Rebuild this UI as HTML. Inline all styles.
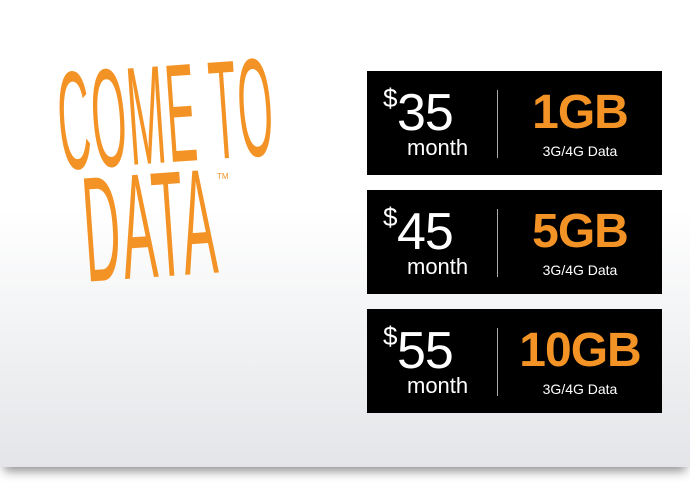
<!DOCTYPE html>
<html><head><style>
body{margin:0;width:690px;height:490px;background:#fff;position:relative;overflow:hidden;font-family:"Liberation Sans",sans-serif}
.card{position:absolute;left:0;top:0;width:690px;height:467px;background:linear-gradient(#fff 0%,#fff 45%,#e3e5e8 100%);box-shadow:0 8px 10px -4px rgba(0,0,0,.45)}
.hw{position:absolute;color:#f39325;font-weight:normal;transform-origin:left top;white-space:nowrap;letter-spacing:4px;line-height:1}
.box{position:absolute;left:367px;width:295px;height:104px;background:#000;color:#fff}
.d{position:absolute;left:16px;top:12px;font-size:26px}
.p{position:absolute;left:30px;top:12px;font-size:52px;font-weight:300;letter-spacing:-1px}
.m{position:absolute;left:40px;top:64px;font-size:22px}
.v{position:absolute;left:130px;top:19px;width:1px;height:68px;background:#aaa}
.g{position:absolute;left:0;right:0;padding-left:131px;text-align:center;top:14px;font-size:48px;font-weight:bold;color:#f39325;letter-spacing:-1px}
.s{position:absolute;left:131px;right:0;text-align:center;top:72px;font-size:14px}
</style></head><body>
<div class="card"></div>
<div class="hw" style="left:53px;top:52px;font-size:140px;transform:rotate(-4deg) scaleX(.32)">COME TO</div>
<div class="hw" style="left:78px;top:155px;font-size:150px;transform:rotate(-4deg) scaleX(.34)">DATA</div>
<div style="position:absolute;left:217px;top:172px;font-size:8px;color:#f39325">TM</div>
<div class="box" style="top:71px"><span class="d">$</span><span class="p">35</span><span class="m">month</span><div class="v"></div><div class="g">1GB</div><div class="s">3G/4G Data</div></div>
<div class="box" style="top:190px"><span class="d">$</span><span class="p">45</span><span class="m">month</span><div class="v"></div><div class="g">5GB</div><div class="s">3G/4G Data</div></div>
<div class="box" style="top:309px"><span class="d">$</span><span class="p">55</span><span class="m">month</span><div class="v"></div><div class="g">10GB</div><div class="s">3G/4G Data</div></div>
</body></html>
